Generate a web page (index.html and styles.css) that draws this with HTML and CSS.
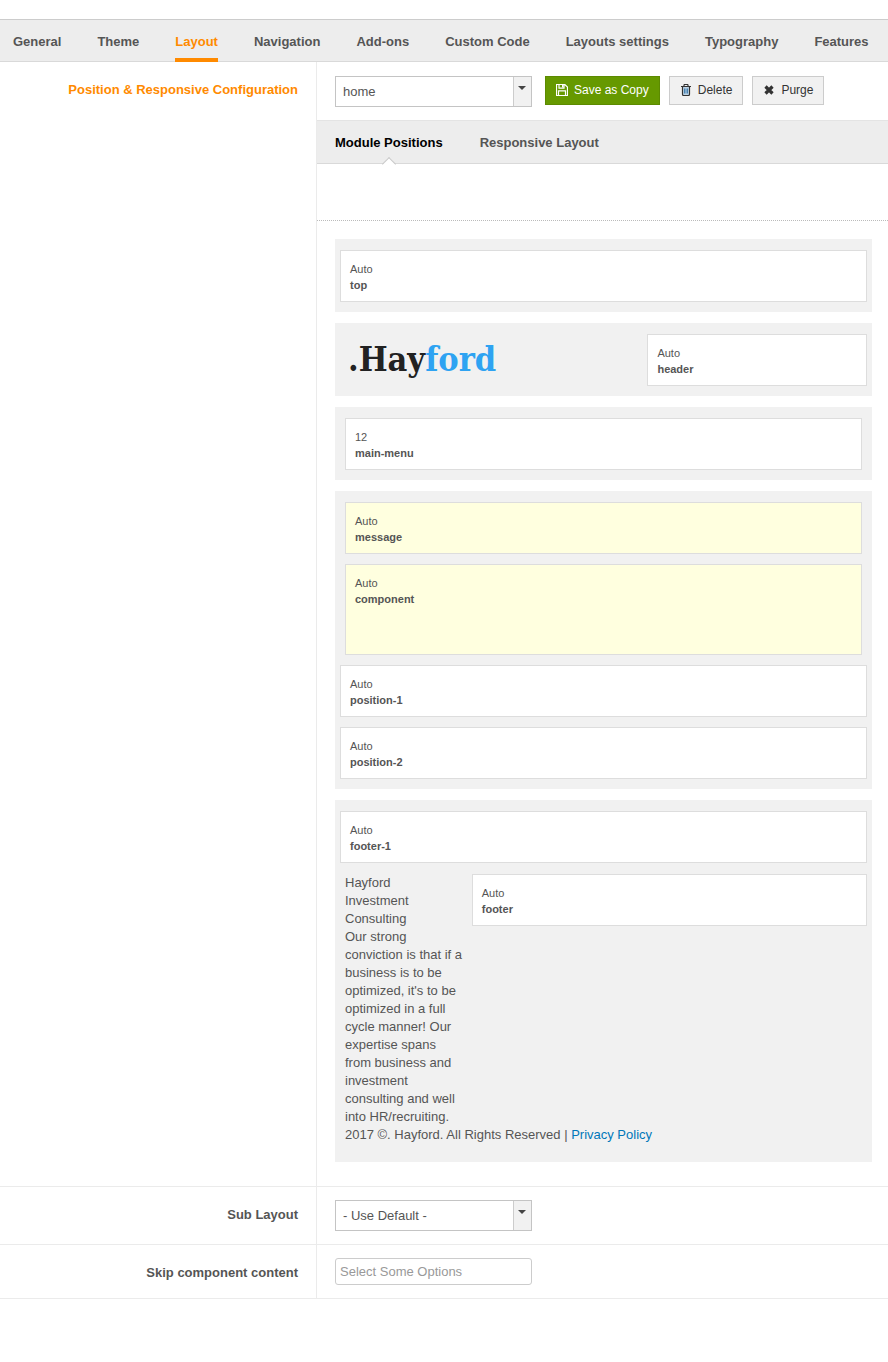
FILE: index.html
```html
<!DOCTYPE html>
<html lang="en">
<head>
<meta charset="utf-8">
<title>Layout settings</title>
<link rel="stylesheet" href="styles.css">
</head>
<body>
<nav class="tabs">
  <a class="tab" href="#">General</a>
  <a class="tab" href="#">Theme</a>
  <a class="tab tab-active" href="#">Layout</a>
  <a class="tab" href="#">Navigation</a>
  <a class="tab" href="#">Add-ons</a>
  <a class="tab" href="#">Custom Code</a>
  <a class="tab" href="#">Layouts settings</a>
  <a class="tab" href="#">Typography</a>
  <a class="tab" href="#">Features</a>
</nav>
<main>
  <section class="row">
    <label class="row-label row-label-active" for="layout">Position &amp; Responsive Configuration</label>
    <div class="row-body row-body-wide">
      <div class="toolbar">
        <div class="select">
          <select id="layout"><option>home</option></select>
          <span class="select-arrow"></span>
        </div>
        <div class="buttons">
          <button class="btn btn-primary" type="button">
            <svg class="icon" viewBox="0 0 12 12"><path d="M.5 .5h8.3l2.7 2.7v8.3H.5zM3 .5v3.600h5V.5M2.500 11.500V6.800h7v4.700" fill="none" stroke="currentColor" stroke-width="1.200"/><path d="M6 1h1.500v2.500H6z" fill="currentColor"/></svg>
            <span>Save as Copy</span>
          </button>
          <button class="btn" type="button">
            <svg class="icon" viewBox="0 0 12 12"><path d="M3 3h6v8H3z" fill="#bcd3e6"/><path d="M1 2.500h10M4 2.500V1.300Q4 .5 4.800.5h2.400Q8 .5 8 1.300v1.200M2.500 2.500v7.700q0 1.300 1.200 1.300h4.600q1.200 0 1.200-1.300V2.500" fill="none" stroke="currentColor" stroke-width="1.200"/><path d="M4.500 4.500v5M6 4.500v5M7.500 4.500v5" stroke="#2b6ea3" stroke-width=".8"/></svg>
            <span>Delete</span>
          </button>
          <button class="btn" type="button">
            <svg class="icon" viewBox="0 0 12 12"><path d="M2.500 2.500l7 7M9.500 2.500l-7 7" stroke="currentColor" stroke-width="3.200"/></svg>
            <span>Purge</span>
          </button>
        </div>
      </div>
      <nav class="subtabs">
        <a class="subtab subtab-active" href="#">Module Positions</a>
        <a class="subtab" href="#">Responsive Layout</a>
      </nav>
      <div class="device-bar"></div>
      <div class="canvas">
        <div class="group">
          <div class="box"><span>Auto</span><strong>top</strong></div>
        </div>
        <div class="group">
          <div class="cols cols-header">
            <div class="logo">.Hay<span class="logo-accent">ford</span></div>
            <div class="box"><span>Auto</span><strong>header</strong></div>
          </div>
        </div>
        <div class="group">
          <div class="box box-inset"><span>12</span><strong>main-menu</strong></div>
        </div>
        <div class="group">
          <div class="box box-inset box-content"><span>Auto</span><strong>message</strong></div>
          <div class="box box-inset box-content box-tall"><span>Auto</span><strong>component</strong></div>
          <div class="box"><span>Auto</span><strong>position-1</strong></div>
          <div class="box"><span>Auto</span><strong>position-2</strong></div>
        </div>
        <div class="group group-footer">
          <div class="box"><span>Auto</span><strong>footer-1</strong></div>
          <div>
            <div class="cols cols-footer">
              <p class="copy">Hayford<br>Investment Consulting<br>Our strong conviction is that if a business is to be optimized, it's to be optimized in a full cycle manner! Our expertise spans from business and investment consulting and well into HR/recruiting.</p>
              <div class="box"><span>Auto</span><strong>footer</strong></div>
            </div>
            <p class="copy">2017 ©. Hayford. All Rights Reserved | <a class="link" href="#">Privacy Policy</a></p>
          </div>
        </div>
      </div>
    </div>
  </section>
  <section class="row">
    <label class="row-label" for="sub-layout">Sub Layout</label>
    <div class="row-body">
      <div class="select">
        <select id="sub-layout"><option>- Use Default -</option></select>
        <span class="select-arrow"></span>
      </div>
    </div>
  </section>
  <section class="row">
    <label class="row-label" for="skip">Skip component content</label>
    <div class="row-body">
      <input class="chooser" id="skip" type="text" placeholder="Select Some Options">
    </div>
  </section>
</main>
</body>
</html>
```
FILE: styles.css
```css
* {
  box-sizing: border-box;
}

body {
  margin: 0;
  padding-top: 19px;
  background: #fff;
  color: #555;
  font: 13px/18px "Liberation Sans", Arial, sans-serif;
}

a {
  color: inherit;
  text-decoration: none;
}

p {
  margin: 0;
}

select,
input,
button {
  font: inherit;
  color: inherit;
}

.tabs {
  display: flex;
  gap: 36px;
  height: 43px;
  padding-left: 13px;
  background: #ededed;
  border-top: 1px solid #ccc;
  border-bottom: 1px solid #d9d9d9;
  white-space: nowrap;
}

.tab {
  height: 42px;
  padding-top: 13px;
  font-weight: bold;
}

.tab-active {
  color: #ff8a00;
  border-bottom: 4px solid #ff8a00;
}

.row {
  display: grid;
  grid-template-columns: 317px minmax(0, 1fr);
  border-bottom: 1px solid #ebebeb;
}

.row-label {
  padding: 19px 18px 0 0;
  border-right: 1px solid #ebebeb;
  font-weight: bold;
  text-align: right;
}

.row-label-active {
  color: #ff8a00;
}

.row-body {
  padding: 13px 18px;
}

.row-body-wide {
  padding: 14px 0 24px;
}

.toolbar {
  display: flex;
  align-items: flex-start;
  gap: 13px;
  padding: 0 18px 13px;
}

.select {
  position: relative;
  width: 197px;
}

.select select {
  display: block;
  width: 100%;
  height: 31px;
  padding: 0 24px 0 7px;
  background: #fff;
  border: 1px solid #c4c4c4;
  border-radius: 0;
  appearance: none;
}

.select-arrow {
  position: absolute;
  top: 1px;
  right: 1px;
  bottom: 1px;
  width: 18px;
  background: #f1f1f1;
  border-left: 1px solid #ccc;
  pointer-events: none;
}

.select-arrow::after {
  content: "";
  display: block;
  width: 0;
  margin: 9px auto 0 4px;
  border: 4px solid transparent;
  border-top-color: #444;
  border-bottom: 0;
}

.buttons {
  display: flex;
  gap: 9px;
}

.btn {
  display: flex;
  align-items: center;
  gap: 6px;
  height: 29px;
  padding: 0 10px 1px;
  background: #f1f1f1;
  border: 1px solid #ccc;
  color: #333;
  font-size: 12px;
  white-space: nowrap;
}

.btn-primary {
  background: #690;
  border-color: #5c8a00;
  color: #fff;
}

.icon {
  width: 12px;
  height: 12px;
}

.subtabs {
  display: flex;
  gap: 37px;
  height: 44px;
  padding: 0 18px;
  background: #ededed;
  border-top: 1px solid #e4e4e4;
  border-bottom: 1px solid #d9d9d9;
}

.subtab {
  position: relative;
  padding-top: 13px;
  font-weight: bold;
}

.subtab-active {
  color: #000;
}

.subtab-active::after {
  content: "";
  position: absolute;
  left: 50%;
  bottom: -6px;
  width: 9px;
  height: 9px;
  margin-left: -5px;
  background: linear-gradient(135deg, #fff 50%, transparent 50%);
  border: 1px solid #ccc;
  border-width: 1px 0 0 1px;
  transform: rotate(45deg);
}

.device-bar {
  height: 57px;
  border-bottom: 1px dotted #bbb;
}

.canvas {
  display: grid;
  gap: 11px;
  padding: 18px 16px 0 18px;
}

.group {
  display: grid;
  gap: 10px;
  padding: 11px 5px 10px;
  background: #f1f1f1;
}

.group-footer {
  gap: 11px;
  padding-bottom: 18px;
}

.box {
  display: flex;
  flex-direction: column;
  height: 52px;
  padding: 10px 9px;
  background: #fff;
  border: 1px solid #ddd;
  font-size: 11px;
  line-height: 16px;
}

.box-inset {
  margin: 0 5px;
}

.box-content {
  background: #ffffdf;
}

.box-tall {
  height: 91px;
}

.cols {
  display: grid;
  align-items: start;
}

.cols-header {
  grid-template-columns: 7fr 5fr;
}

.cols-footer {
  grid-template-columns: 3fr 9fr;
}

.copy {
  padding: 0 8px 0 5px;
}

.logo {
  padding: 5px 8px;
  color: #222;
  font: bold 34px/40px "DejaVu Serif Condensed", "DejaVu Serif", serif;
}

.logo-accent {
  color: #2ea3f2;
}

.link {
  color: #0077b9;
}

.chooser {
  display: block;
  width: 197px;
  height: 27px;
  padding: 0 4px;
  background: #fff;
  border: 1px solid #ccc;
  border-radius: 3px;
}

.chooser::placeholder {
  color: #999;
  opacity: 1;
}
```
